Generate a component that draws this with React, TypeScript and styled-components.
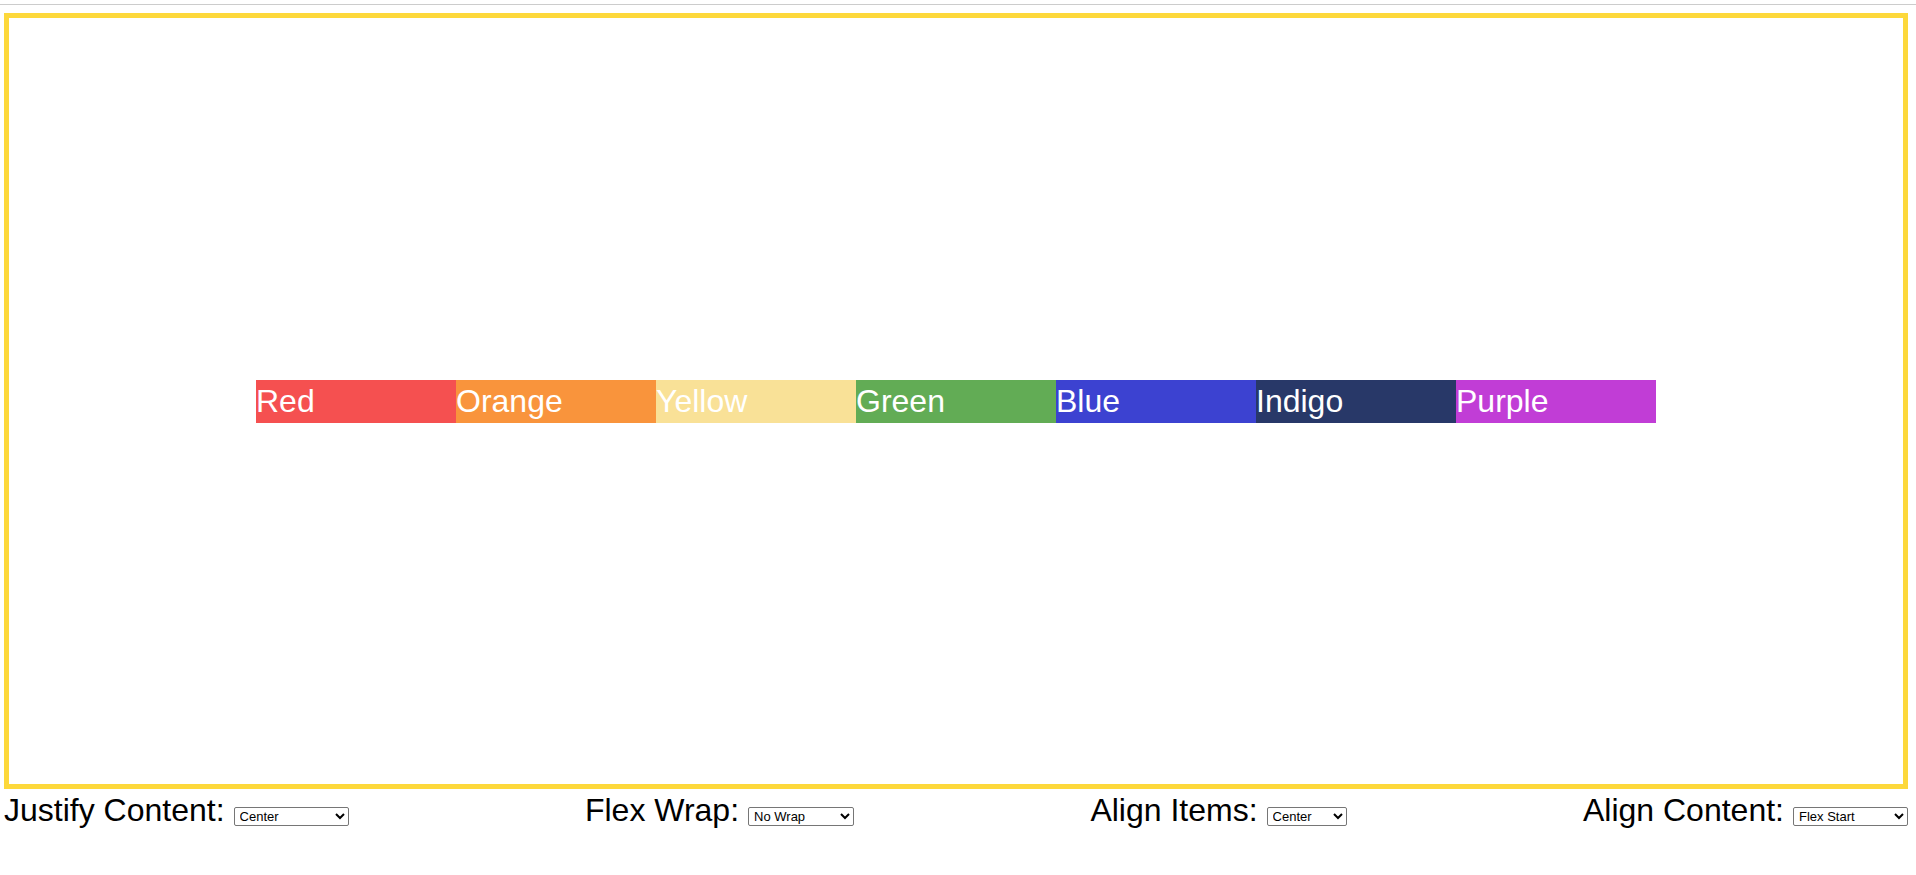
import React, { useState } from 'react';
import styled, { createGlobalStyle } from 'styled-components';

const GlobalStyle = createGlobalStyle`
  html, body {
    margin: 0;
    padding: 0;
    background: #ffffff;
    font-family: "Liberation Sans", Arial, Helvetica, sans-serif;
  }
`;

const TopRule = styled.div`
  margin-top: 4px;
  height: 1px;
  background: #cccccc;
`;

const Page = styled.div`
  padding: 0 8px 0 4px;
`;

const Board = styled.div<{ $justify: string; $wrap: string; $items: string; $content: string }>`
  margin-top: 8px;
  height: 766px;
  border: 5px solid #fdd83b;
  display: flex;
  justify-content: ${(p) => p.$justify};
  flex-wrap: ${(p) => p.$wrap};
  align-items: ${(p) => p.$items};
  align-content: ${(p) => p.$content};
`;

const Swatch = styled.div<{ $color: string }>`
  width: 200px;
  height: 43px;
  background: ${(p) => p.$color};
  color: #ffffff;
  font-size: 32px;
  line-height: 43px;
  white-space: nowrap;
  flex-shrink: 0;
`;

const Controls = styled.div`
  display: flex;
  justify-content: space-between;
  align-items: baseline;
  margin-top: 3px;
`;

const Control = styled.label`
  display: flex;
  align-items: baseline;
  gap: 9px;
  font-size: 32px;
  color: #000000;
`;

const Picker = styled.select<{ $width: number }>`
  width: ${(p) => p.$width}px;
  height: 19px;
  font-family: "Liberation Sans", Arial, sans-serif;
  font-size: 13px;
  color: #000000;
  background: #ffffff;
  border: 1px solid #767676;
  border-radius: 2px;
  padding: 0 1px;
`;

const colors = [
  { name: 'Red', color: '#f55050' },
  { name: 'Orange', color: '#f9943c' },
  { name: 'Yellow', color: '#f9e197' },
  { name: 'Green', color: '#62ac55' },
  { name: 'Blue', color: '#3c42d1' },
  { name: 'Indigo', color: '#283868' },
  { name: 'Purple', color: '#c13dd6' },
];

const justifyOptions = [
  ['flex-start', 'Flex Start'],
  ['flex-end', 'Flex End'],
  ['center', 'Center'],
  ['space-between', 'Space Between'],
  ['space-around', 'Space Around'],
  ['space-evenly', 'Space Evenly'],
];
const wrapOptions = [
  ['nowrap', 'No Wrap'],
  ['wrap', 'Wrap'],
  ['wrap-reverse', 'Wrap Reverse'],
];
const itemsOptions = [
  ['flex-start', 'Flex Start'],
  ['flex-end', 'Flex End'],
  ['center', 'Center'],
  ['stretch', 'Stretch'],
];
const contentOptions = [
  ['flex-start', 'Flex Start'],
  ['flex-end', 'Flex End'],
  ['center', 'Center'],
  ['space-between', 'Space Between'],
  ['space-around', 'Space Around'],
  ['stretch', 'Stretch'],
];

export default function App() {
  const [justify, setJustify] = useState('center');
  const [wrap, setWrap] = useState('nowrap');
  const [items, setItems] = useState('center');
  const [content, setContent] = useState('flex-start');

  return (
    <>
      <GlobalStyle />
      <TopRule />
      <Page>
        <Board $justify={justify} $wrap={wrap} $items={items} $content={content}>
          {colors.map((c) => (
            <Swatch key={c.name} $color={c.color}>
              {c.name}
            </Swatch>
          ))}
        </Board>

        <Controls>
          <Control>
            Justify Content:
            <Picker $width={115} value={justify} onChange={(e) => setJustify(e.target.value)}>
              {justifyOptions.map(([v, l]) => (
                <option key={v} value={v}>{l}</option>
              ))}
            </Picker>
          </Control>
          <Control>
            Flex Wrap:
            <Picker $width={106} value={wrap} onChange={(e) => setWrap(e.target.value)}>
              {wrapOptions.map(([v, l]) => (
                <option key={v} value={v}>{l}</option>
              ))}
            </Picker>
          </Control>
          <Control>
            Align Items:
            <Picker $width={80} value={items} onChange={(e) => setItems(e.target.value)}>
              {itemsOptions.map(([v, l]) => (
                <option key={v} value={v}>{l}</option>
              ))}
            </Picker>
          </Control>
          <Control>
            Align Content:
            <Picker $width={115} value={content} onChange={(e) => setContent(e.target.value)}>
              {contentOptions.map(([v, l]) => (
                <option key={v} value={v}>{l}</option>
              ))}
            </Picker>
          </Control>
        </Controls>
      </Page>
    </>
  );
}
